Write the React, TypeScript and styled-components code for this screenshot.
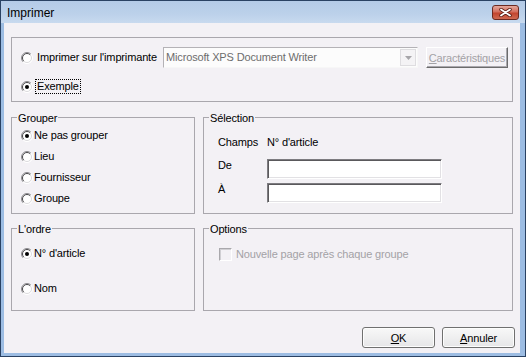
import React from "react";
import styled, { createGlobalStyle } from "styled-components";

const GlobalStyle = createGlobalStyle`
  html, body {
    margin: 0;
    padding: 0;
    background: #ffffff;
  }
  body {
    font-family: "Liberation Sans", Arial, sans-serif;
    font-size: 11px;
    letter-spacing: -0.15px;
    color: #000;
  }
`;

const FACE = "#f3f1f5";

const Window = styled.div`
  width: 526px;
  height: 357px;
  box-sizing: border-box;
  display: flex;
  flex-direction: column;
  background: #9dbde3;
  border: 1px solid #2a4263;
`;

const TitleBar = styled.div`
  height: 22px;
  display: flex;
  align-items: center;
  padding: 0 6px;
  background: linear-gradient(to bottom, #b4cbe7 0%, #bcd1ea 60%, #c8daef 100%);
  font-size: 12px;
  letter-spacing: 0;
`;

const TitleText = styled.span`
  margin-top: 1px;
`;

const CloseButton = styled.div`
  margin-left: auto;
  width: 27px;
  height: 15px;
  box-sizing: border-box;
  border: 1px solid #6b2a21;
  border-radius: 3px;
  background: linear-gradient(to bottom, #e4a89c 0%, #d36e5d 45%, #c2452f 55%, #cf6a52 100%);
  display: flex;
  align-items: center;
  justify-content: center;
`;

const Client = styled.div`
  flex: 1;
  margin: 0 5px 3px 3px;
  background: ${FACE};
  padding: 14px 5px 0 7px;
  display: flex;
  flex-direction: column;
`;

const Box = styled.div<{ $h: number; $pad: string }>`
  position: relative;
  box-sizing: border-box;
  height: ${(p) => p.$h}px;
  border: 1px solid #a9a7ad;
  padding: ${(p) => p.$pad};
`;

const TopBox = styled(Box)`
  margin-right: 2px;
`;

const Legend = styled.span`
  position: absolute;
  top: -6px;
  left: 5px;
  padding: 0 1px;
  line-height: 13px;
  background: ${FACE};
`;

const BoxRow = styled.div<{ $top: number }>`
  display: grid;
  grid-template-columns: 184px 310px;
  column-gap: 8px;
  margin-top: ${(p) => p.$top}px;
`;

const Stack = styled.div<{ $gap: number }>`
  display: flex;
  flex-direction: column;
  gap: ${(p) => p.$gap}px;
`;

const PrinterRow = styled.div`
  display: flex;
  align-items: center;
  height: 21px;
`;

const Option = styled.label<{ $gap: number; $w?: number }>`
  display: flex;
  align-items: center;
  gap: ${(p) => p.$gap}px;
  height: 21px;
  line-height: 13px;
  ${(p) => (p.$w ? `width: ${p.$w}px; flex: none;` : "")}
`;

const Focus = styled.span`
  outline: 1px dotted #000;
  outline-offset: 0;
  padding: 0 1px;
`;

const Combo = styled.div`
  position: relative;
  width: 255px;
  height: 21px;
  box-sizing: border-box;
  border: 1px solid;
  border-color: #b4b2b6 #f7f7f7 #f7f7f7 #b4b2b6;
  background: #fcfcfc;
  color: #6d6d6d;
  padding: 3px 0 0 2px;
  line-height: 13px;
`;

const ComboArrow = styled.div`
  position: absolute;
  top: 1px;
  right: 1px;
  width: 16px;
  height: 17px;
  box-sizing: border-box;
  border: 1px solid #dedde0;
  background: #f4f3f5;
  display: flex;
  align-items: center;
  justify-content: center;
`;

const RaisedButton = styled.div`
  margin-left: 8px;
  width: 82px;
  height: 21px;
  box-sizing: border-box;
  border: 1px solid;
  border-color: #ffffff #6b6b6b #6b6b6b #ffffff;
  box-shadow: inset -1px -1px 0 #a9a7ad;
  color: #a3a2a6;
  display: flex;
  align-items: center;
  justify-content: center;
  letter-spacing: -0.2px;
`;

const SelGrid = styled.div`
  display: grid;
  grid-template-columns: 49px 175px;
  grid-template-rows: 23px 24px 20px;
  line-height: 13px;
`;

const Field = styled.div`
  height: 20px;
  box-sizing: border-box;
  border: 1px solid;
  border-color: #7d7c80 #ffffff #ffffff #7d7c80;
  box-shadow: inset 1px 1px 0 #5a595c, inset -1px -1px 0 #e2e1e4;
  background: #ffffff;
`;

const Check = styled.span`
  width: 13px;
  height: 13px;
  box-sizing: border-box;
  border: 1px solid;
  border-color: #a9a8ac #ffffff #ffffff #a9a8ac;
  box-shadow: inset 1px 1px 0 #d0cfd3;
  background: ${FACE};
`;

const Disabled = styled.span`
  color: #a3a2a6;
`;

const Buttons = styled.div`
  display: flex;
  justify-content: flex-end;
  gap: 7px;
  margin-top: 16px;
`;

const PushButton = styled.div`
  width: 73px;
  height: 21px;
  box-sizing: border-box;
  border: 1px solid #707070;
  border-radius: 3px;
  background: linear-gradient(to bottom, #f8f8f8 0%, #efeff0 50%, #e6e6e8 100%);
  box-shadow: inset 0 0 0 1px #fdfdfd;
  display: flex;
  align-items: center;
  justify-content: center;
`;

const Radio: React.FC<{ checked?: boolean }> = ({ checked }) => (
  <svg width="12" height="12" viewBox="0 0 12 12">
    <circle cx="6" cy="6" r="5.5" fill="#fff" />
    <path d="M2.1 9.9 A5.5 5.5 0 0 1 9.9 2.1" fill="none" stroke="#8d8c90" />
    <path d="M9.9 2.1 A5.5 5.5 0 0 1 2.1 9.9" fill="none" stroke="#ffffff" />
    <path d="M2.8 9.2 A4.5 4.5 0 0 1 9.2 2.8" fill="none" stroke="#4a494c" />
    <path d="M9.2 2.8 A4.5 4.5 0 0 1 2.8 9.2" fill="none" stroke="#dcdbde" />
    {checked && <circle cx="6" cy="6" r="2" fill="#000" />}
  </svg>
);

const App: React.FC = () => {
  return (
    <>
      <GlobalStyle />
      <Window>
        <TitleBar>
          <TitleText>Imprimer</TitleText>
          <CloseButton>
            <svg width="13" height="9" viewBox="0 0 13 9">
              <path d="M2 1.5 L11 7.5 M11 1.5 L2 7.5" stroke="#5b1d14" strokeWidth="3.4" strokeLinecap="round" />
              <path d="M2 1.5 L11 7.5 M11 1.5 L2 7.5" stroke="#ffffff" strokeWidth="1.8" strokeLinecap="round" />
            </svg>
          </CloseButton>
        </TitleBar>

        <Client>
          <TopBox $h={65} $pad="9px 0 0 9px">
            <Stack $gap={8}>
              <PrinterRow>
                <Option $gap={4} $w={142}>
                  <Radio />
                  <span>Imprimer sur l'imprimante</span>
                </Option>
                <Combo>
                  Microsoft XPS Document Writer
                  <ComboArrow>
                    <svg width="7" height="4" viewBox="0 0 7 4">
                      <path d="M0 0 H7 L3.5 4 Z" fill="#a6a5a9" />
                    </svg>
                  </ComboArrow>
                </Combo>
                <RaisedButton>
                  <span>
                    <u>C</u>aractéristiques
                  </span>
                </RaisedButton>
              </PrinterRow>
              <Option $gap={3}>
                <Radio checked />
                <Focus>Exemple</Focus>
              </Option>
            </Stack>
          </TopBox>

          <BoxRow $top={15}>
            <Box $h={97} $pad="7px 0 0 9px">
              <Legend>Grouper</Legend>
              <Stack $gap={0}>
                <Option $gap={1}>
                  <Radio checked />
                  <span>Ne pas grouper</span>
                </Option>
                <Option $gap={1}>
                  <Radio />
                  <span>Lieu</span>
                </Option>
                <Option $gap={1}>
                  <Radio />
                  <span>Fournisseur</span>
                </Option>
                <Option $gap={1}>
                  <Radio />
                  <span>Groupe</span>
                </Option>
              </Stack>
            </Box>
            <Box $h={97} $pad="18px 0 0 14px">
              <Legend>Sélection</Legend>
              <SelGrid>
                <span>Champs</span>
                <span>N° d'article</span>
                <span>De</span>
                <Field />
                <span>À</span>
                <Field />
              </SelGrid>
            </Box>
          </BoxRow>

          <BoxRow $top={14}>
            <Box $h={83} $pad="14px 0 0 9px">
              <Legend>L'ordre</Legend>
              <Stack $gap={14}>
                <Option $gap={1}>
                  <Radio checked />
                  <span>N° d'article</span>
                </Option>
                <Option $gap={1}>
                  <Radio />
                  <span>Nom</span>
                </Option>
              </Stack>
            </Box>
            <Box $h={83} $pad="15px 0 0 15px">
              <Legend>Options</Legend>
              <Option $gap={4}>
                <Check />
                <Disabled>Nouvelle page après chaque groupe</Disabled>
              </Option>
            </Box>
          </BoxRow>

          <Buttons>
            <PushButton>
              <span>
                <u>O</u>K
              </span>
            </PushButton>
            <PushButton>
              <span>
                <u>A</u>nnuler
              </span>
            </PushButton>
          </Buttons>
        </Client>
      </Window>
    </>
  );
};

export default App;
